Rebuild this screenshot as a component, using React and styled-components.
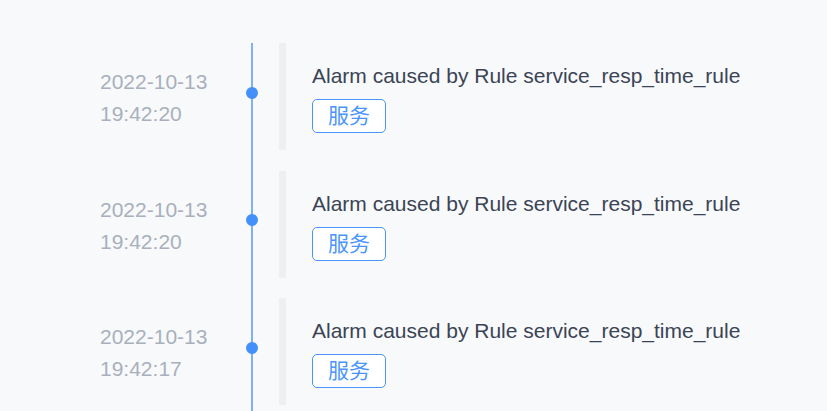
import styled, { createGlobalStyle } from 'styled-components';

const GlobalStyle = createGlobalStyle`
  html, body {
    margin: 0;
    padding: 0;
    background: #f8f9fb;
    font-family: "Liberation Sans", Arial, "Noto Sans CJK SC", sans-serif;
  }
`

const Page = styled.div`
  height: 411px;
  overflow: hidden;
  background: #f8f9fb;
  padding: 43px 0 0 100px;
  box-sizing: border-box;
`

const Row = styled.div`
  display: flex;
  align-items: stretch;
`

const DateCol = styled.div`
  width: 146px;
  padding-top: 23px;
  font-size: 21px;
  line-height: 32px;
  color: #a9b0bc;
`

const Axis = styled.div`
  position: relative;
  width: 12px;
  display: flex;
  justify-content: center;
  &::before {
    content: '';
    width: 2px;
    background: #7fb1f8;
  }
`

const Dot = styled.span`
  position: absolute;
  top: 43.5px;
  left: 0;
  width: 12px;
  height: 12px;
  border-radius: 50%;
  background: #4390fb;
`

const Card = styled.div`
  margin: 0 0 20.5px 21px;
  height: 107px;
  box-sizing: border-box;
  border-left: 7px solid #eeeff1;
  padding: 21px 0 0 26px;
`

const Title = styled.div`
  font-size: 21px;
  line-height: 24px;
  color: #3b4455;
  white-space: nowrap;
`

const Tag = styled.span`
  display: inline-block;
  margin-top: 11px;
  padding: 0 15px;
  height: 34px;
  line-height: 32px;
  box-sizing: border-box;
  border: 1px solid #4a94fb;
  border-radius: 5px;
  font-size: 21px;
  color: #4a94fb;
  background: #fff;
`

const alarms = [
  { date: '2022-10-13', time: '19:42:20', msg: 'Alarm caused by Rule service_resp_time_rule', tag: '服务' },
  { date: '2022-10-13', time: '19:42:20', msg: 'Alarm caused by Rule service_resp_time_rule', tag: '服务' },
  { date: '2022-10-13', time: '19:42:17', msg: 'Alarm caused by Rule service_resp_time_rule', tag: '服务' },
]

const AlarmItem = ({date, time, msg, tag}) => (
  <Row>
    <DateCol>
      <div>{date}</div>
      <div>{time}</div>
    </DateCol>
    <Axis><Dot /></Axis>
    <Card>
      <Title>{msg}</Title>
      <Tag>{tag}</Tag>
    </Card>
  </Row>
)

const App = () => {
  return (
    <>
      <GlobalStyle />
      <Page>
        {alarms.map((item, index) => <AlarmItem key={index} {...item} />)}
      </Page>
    </>
  )
}

export default App
